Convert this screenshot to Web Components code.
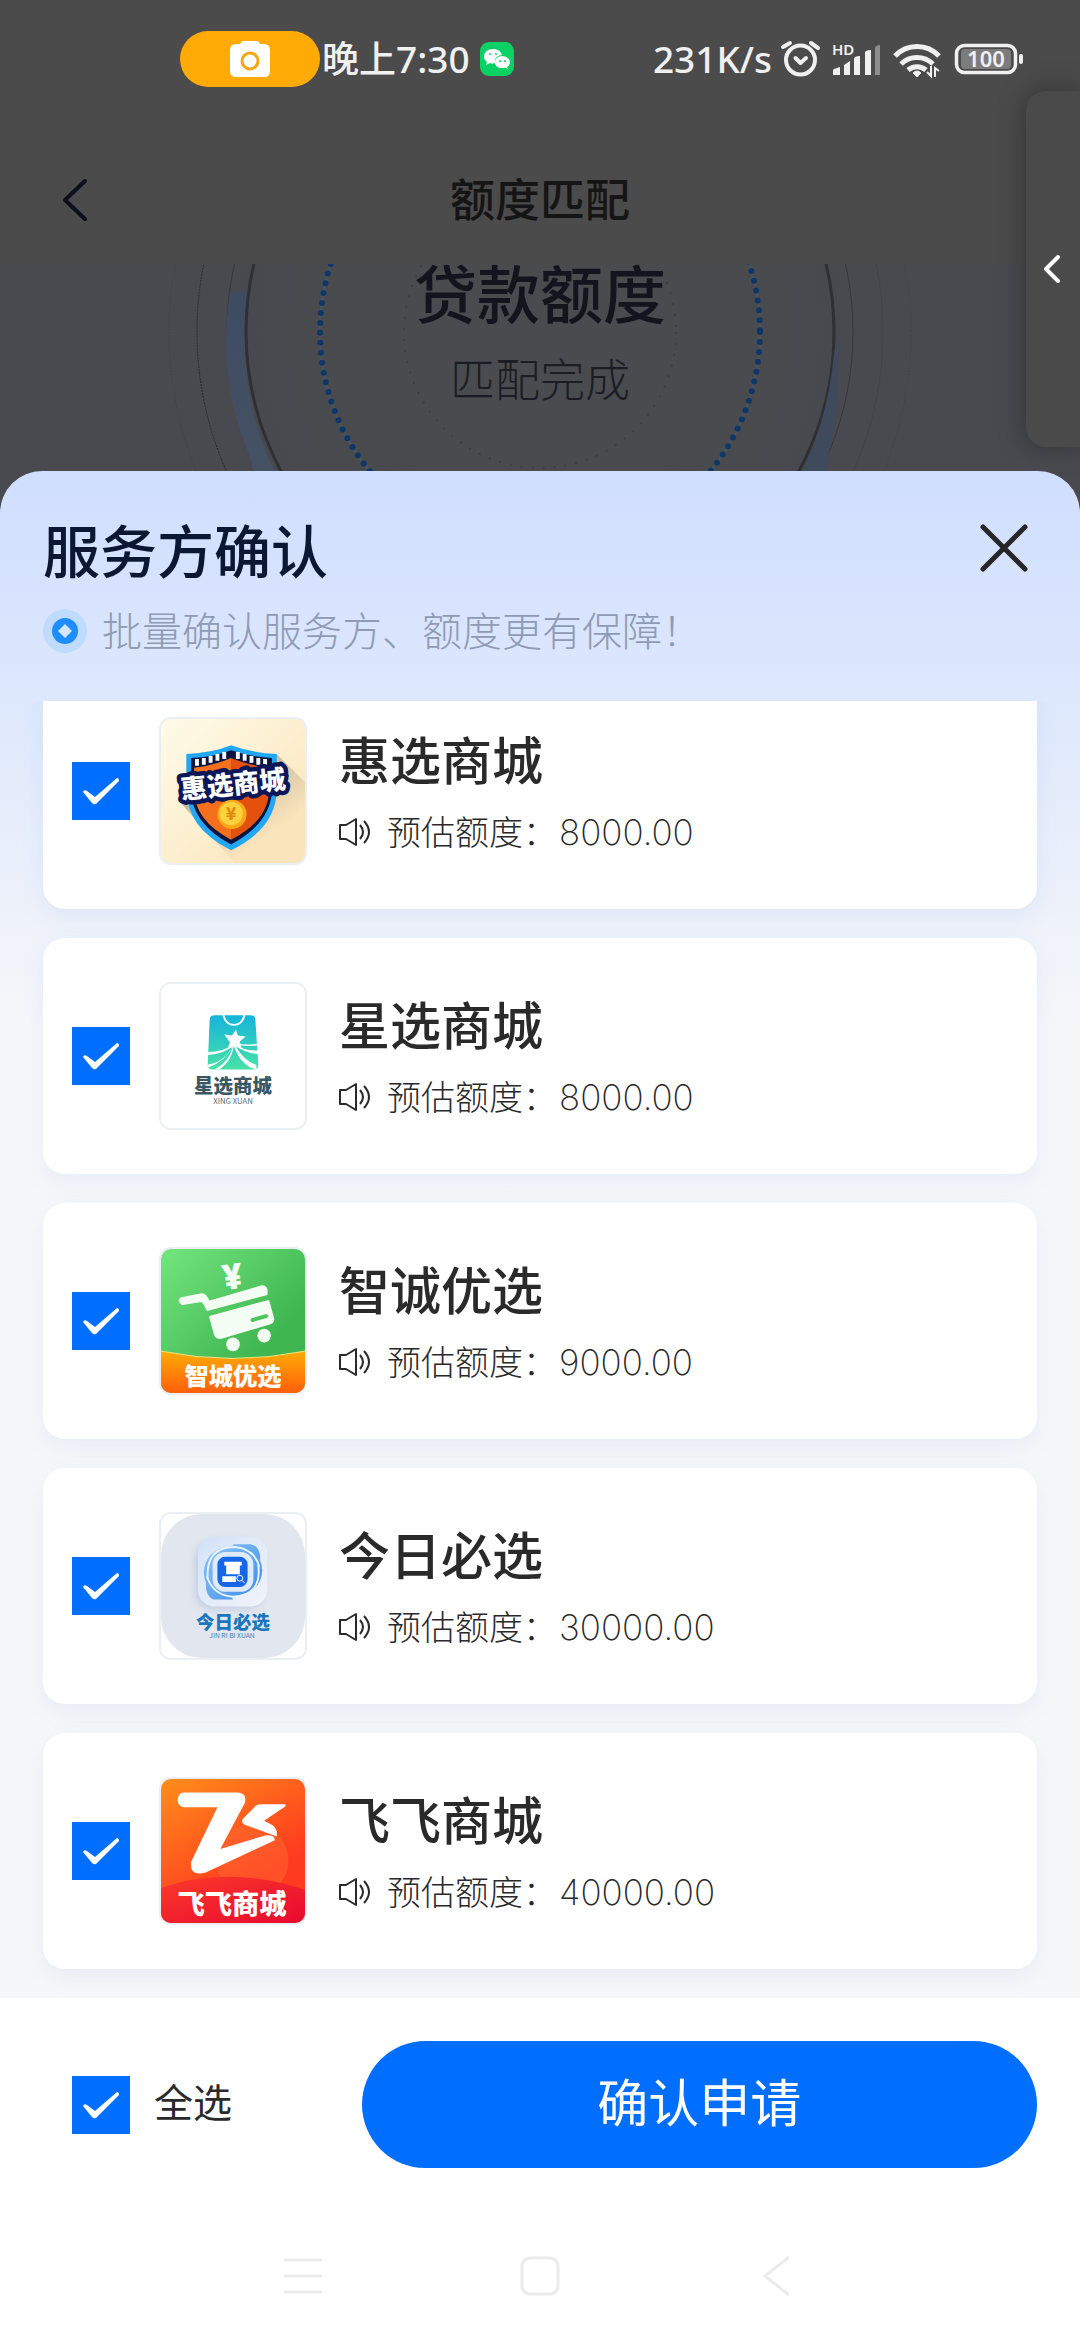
<!DOCTYPE html>
<html lang="zh-CN">
<head>
<meta charset="utf-8">
<meta name="viewport" content="width=device-width, initial-scale=1">
<title>额度匹配</title>
<style>
body {
  margin: 0;
  height: 100vh;
  display: flex;
  flex-direction: column;
  background: #4b4b4b;
  color: #2a2a2a;
  font-family: "Noto Sans", "Noto Sans CJK SC", sans-serif;
  overflow: hidden;
}
svg text {
  font-family: "Noto Sans CJK SC", sans-serif;
  font-weight: 900;
  text-anchor: middle;
}
</style>
</head>
<body>

<status-bar></status-bar>
<page-header>额度匹配</page-header>
<match-stage>
  <span slot="title">贷款额度</span>
  <span slot="state">匹配完成</span>
</match-stage>
<side-handle></side-handle>

<confirm-sheet>
  <span slot="title">服务方确认</span>
  <span slot="hint">批量确认服务方、额度更有保障！</span>

  <provider-card amount="8000.00">
    惠选商城
    <svg slot="logo" viewBox="0 0 148 148" aria-hidden="true">
      <defs>
        <linearGradient id="hx-bg" x1="0" y1="0" x2="1" y2="1">
          <stop offset="0" stop-color="#fefbea"/><stop offset="1" stop-color="#fbe3b5"/>
        </linearGradient>
        <linearGradient id="hx-sh" x1="0.2" y1="0" x2="1" y2="1">
          <stop offset="0.2" stop-color="#c4b7a1"/><stop offset="0.7" stop-color="#fae4bb"/>
        </linearGradient>
      </defs>
      <rect width="148" height="148" fill="url(#hx-bg)"/>
      <path d="M119 36L148 65V148H76L20 86Z" fill="url(#hx-sh)"/>
      <path d="M26 36Q52 35 72 27Q94 35 119 36V72Q119 112 72 135Q26 112 26 72Z" fill="#22a7f5"/>
      <path d="M31 40Q54 39 72 32Q92 39 114 40V73Q113 107 72 129Q31 107 31 73Z" fill="#0b1440"/>
      <path d="M34 50Q54 48 72 40V124Q34 104 34 73Z" fill="#f4701c"/>
      <path d="M72 40Q92 48 111 50V73Q111 104 72 124Z" fill="#e4500e"/>
      <path d="M37 41v7M44 40v7M51 38v7M58 36v7M65 34v7M79 34v7M86 36v7M93 38v7M100 40v7M107 41v7" stroke="#fff" stroke-width="4"/>
      <g transform="rotate(-6 74 66)">
        <text x="74" y="77" font-size="27" fill="#fff" stroke="#0b1758" stroke-width="9" stroke-linejoin="round" paint-order="stroke">惠选商城</text>
      </g>
      <circle cx="73" cy="98" r="15" fill="#f9a81a"/>
      <circle cx="72" cy="97" r="12" fill="#fdd23c"/>
      <text x="72" y="104" font-size="18" fill="#e08a10">¥</text>
    </svg>
  </provider-card>

  <provider-card amount="8000.00">
    星选商城
    <svg slot="logo" viewBox="0 0 148 148" aria-hidden="true">
      <defs>
        <linearGradient id="xx" x1="0" y1="0" x2="0" y2="1">
          <stop offset="0" stop-color="#14b4dc"/><stop offset="1" stop-color="#48e2a6"/>
        </linearGradient>
      </defs>
      <rect width="148" height="148" fill="#fff"/>
      <path d="M55 32H92Q97 32 97 37L100 83Q100 88 95 88H53Q48 88 48 83L50 37Q50 32 55 32Z" fill="url(#xx)"/>
      <path d="M64 31Q66 42 75 42Q84 42 86 31" fill="none" stroke="#fff" stroke-width="2"/>
      <path d="M77 47L79 53L87 54L81 59L83 67L76 64L68 67L71 60L65 52L73 53Z" fill="#fff"/>
      <path d="M74 62Q64 70 48 70V73Q66 72 74 63Q66 80 48 83V86Q66 80 74 64Q70 80 55 88H60Q72 80 75 64Q82 84 98 88V83Q86 80 76 63Q88 72 101 72V68Q88 70 76 62Q86 65 101 63V61Q86 64 76 60Z" fill="#fff"/>
      <text x="74" y="112" font-size="20" fill="#3a5862">星选商城</text>
      <text x="74" y="123" font-size="8" fill="#55717a" style="font-weight: 400">XING XUAN</text>
    </svg>
  </provider-card>

  <provider-card amount="9000.00">
    智诚优选
    <svg slot="logo" viewBox="0 0 148 148" aria-hidden="true">
      <defs>
        <linearGradient id="zc-bg" x1="0" y1="0" x2="1" y2="1">
          <stop offset="0" stop-color="#74e57f"/><stop offset="0.7" stop-color="#3fb650"/>
        </linearGradient>
        <linearGradient id="zc-foot" x1="0" y1="0" x2="0" y2="1">
          <stop offset="0" stop-color="#ffab05"/><stop offset="1" stop-color="#ff5f0a"/>
        </linearGradient>
      </defs>
      <rect width="148" height="148" fill="url(#zc-bg)"/>
      <path d="M0 105Q74 120 148 105V148H0Z" fill="url(#zc-foot)"/>
      <path d="M0 105Q74 120 148 105" fill="none" stroke="#ffe27a"/>
      <g fill="#f4fdf4" stroke="#f4fdf4" stroke-width="3" stroke-linejoin="round">
        <path d="M21 51L42 47Q46 47 49 55L103 39Q107 38 108 42V46L48 62Q44 53 41 53L22 56Q18 54 21 51Z"/>
        <path d="M51 70L110 54L115 72Q115 75 112 76L61 91Q57 91 56 88Z"/>
      </g>
      <path d="M94 73L108 69" stroke="#4fc35e" stroke-width="4" stroke-linecap="round"/>
      <circle cx="74" cy="98" r="7" fill="#f4fdf4"/>
      <circle cx="106" cy="89" r="7" fill="#f4fdf4"/>
      <text x="73" y="41" font-size="36" fill="#f4fdf4" transform="rotate(-8 73 26)" style="font-family: 'Noto Sans', sans-serif">¥</text>
      <text x="74" y="140" font-size="25" fill="#fff">智城优选</text>
    </svg>
  </provider-card>

  <provider-card amount="30000.00">
    今日必选
    <svg slot="logo" viewBox="0 0 148 148" aria-hidden="true">
      <defs>
        <linearGradient id="jr-tile" x1="0" y1="0" x2="1" y2="1">
          <stop offset="0" stop-color="#d3e2f8"/><stop offset="1" stop-color="#f1f4fa"/>
        </linearGradient>
        <linearGradient id="jr-ring" x1="0" y1="0" x2="1" y2="1">
          <stop offset="0" stop-color="#8cc6fa"/><stop offset="1" stop-color="#3c8be6"/>
        </linearGradient>
        <filter id="jr-soft" x="-30%" y="-30%" width="160%" height="160%"><feGaussianBlur stdDeviation="4"/></filter>
      </defs>
      <rect width="148" height="148" fill="#fff"/>
      <rect width="148" height="148" rx="42" fill="#e2e6ee"/>
      <rect x="35" y="28" width="70" height="70" rx="18" fill="#c3cee2" filter="url(#jr-soft)"/>
      <rect x="38" y="23" width="71" height="72" rx="17" fill="url(#jr-tile)"/>
      <g fill="url(#jr-ring)">
        <circle cx="70" cy="60" r="26"/>
        <circle cx="78" cy="58" r="26"/>
        <path d="M74 31H92Q102 33 102 46L96 70ZM74 88H54Q46 85 46 72L52 48Z"/>
      </g>
      <path d="M48 66Q46 34 76 34Q96 36 101 54M100 52Q104 84 74 85Q54 84 47 64" fill="none" stroke="#eaf3ff" stroke-width="2"/>
      <rect x="53" y="39" width="42" height="41" rx="13" fill="#dfeafa"/>
      <rect x="58" y="44" width="31" height="31" rx="8" fill="#1667e6"/>
      <path d="M65 49H83V53H81V62H67V53H65ZM63 64H77V70H63Z" fill="#fff"/>
      <circle cx="81" cy="66" r="3" fill="#1667e6" stroke="#fff" stroke-width="1"/>
      <path d="M83 68l3 3" stroke="#fff" stroke-width="1"/>
      <text x="74" y="118" font-size="19" fill="#1976bd">今日必选</text>
      <text x="73" y="127" font-size="7" fill="#3a80b8" style="font-weight: 400">JIN RI BI XUAN</text>
    </svg>
  </provider-card>

  <provider-card amount="40000.00">
    飞飞商城
    <svg slot="logo" viewBox="0 0 148 148" aria-hidden="true">
      <defs>
        <linearGradient id="ff-bg" x1="0" y1="0" x2="0.6" y2="1">
          <stop offset="0" stop-color="#ff8e1a"/><stop offset="0.8" stop-color="#ff3b1f"/>
        </linearGradient>
        <linearGradient id="ff-foot" x1="0" y1="0" x2="1" y2="1">
          <stop offset="0" stop-color="#fb3a2a"/><stop offset="1" stop-color="#e80930"/>
        </linearGradient>
      </defs>
      <rect width="148" height="148" fill="url(#ff-bg)"/>
      <circle cx="94" cy="84" r="37" fill="#ff6a33" opacity="0.45"/>
      <path d="M0 112Q70 88 148 114V148H0Z" fill="url(#ff-foot)"/>
      <path d="M24 14H79Q89 15 86 25L61 72L107 58Q117 57 117 63L46 96Q29 101 31 85L58 29H24Q17 28 17 21Q18 14 24 14Z" fill="#fff"/>
      <path d="M128 26H103Q98 26 95 30L84 41Q82 45 86 47L119 59V54Q118 49 112 46L106 43L128 28Z" fill="#fff"/>
      <text x="73" y="139" font-size="28" fill="#fff">飞飞商城</text>
    </svg>
  </provider-card>
</confirm-sheet>

<system-nav></system-nav>

<template id="status-bar">
  <style>
    :host {
      display: flex;
      justify-content: space-between;
      align-items: center;
      height: 118px;
      padding: 0 56px 18px 180px;
      color: #f0f0f0;
      font-size: 37px;
      line-height: 44px;
      font-weight: 500;
      flex: none;
    }
    .left, .right { display: flex; align-items: center; white-space: nowrap; }
    .right { gap: 8px; }
    svg { display: block; }
    .pill {
      display: grid;
      place-items: center;
      width: 140px;
      height: 56px;
      border-radius: 28px;
      background: #ffaa05;
    }
    time { margin: 0 10px 0 2px; }
    text { font-family: "Noto Sans", sans-serif; font-weight: 600; fill: #f0f0f0; }
  </style>
  <div class="left">
    <div class="pill">
      <svg width="40" height="36" viewBox="0 0 40 36">
        <path d="M6 3H10L12 0H28L30 3H34Q40 3 40 9V30Q40 36 34 36H6Q0 36 0 30V9Q0 3 6 3Z" fill="#fff"/>
        <circle cx="20" cy="20" r="8" fill="#fff" stroke="#f9a51a" stroke-width="3"/>
      </svg>
    </div>
    <time>晚上7:30</time>
    <svg width="34" height="34" viewBox="0 0 34 34">
      <rect width="34" height="34" rx="9" fill="#0bd165"/>
      <path d="M13 7C8 7 4 10 4 14.500C4 17 5 18.500 7 20L6 23L10 21Q12 22 15 21C14 16 18 13 22 13C21 9 17 7 13 7Z" fill="#fff"/>
      <path d="M22 14C18 14 15 17 15 20C15 24 18 26 22 26Q24 26 25 25.500L28 27L27 25C29 24 30 22 30 20C30 17 26 14 22 14Z" fill="#fff"/>
      <g fill="#0bd165"><circle cx="10" cy="12" r="1"/><circle cx="16" cy="12" r="1"/><circle cx="20" cy="19" r="1"/><circle cx="25" cy="19" r="1"/></g>
    </svg>
  </div>
  <div class="right">
    <span>231K/s</span>
    <svg width="44" height="40" viewBox="0 0 44 40" fill="none" stroke="#f0f0f0" stroke-width="4" stroke-linecap="round" stroke-linejoin="round">
      <circle cx="20.500" cy="21" r="14.500"/>
      <path d="M3 8L10 4M31 4L38 9M15.500 19L20.500 24L26 19"/>
    </svg>
    <svg width="52" height="40" viewBox="0 0 52 40" fill="#f0f0f0">
      <text x="0" y="16" font-size="15">HD</text>
      <path d="M2 30L8 28V36H1V31ZM12 26L18 22V36H12ZM22 20Q22 17 28 17V36H22ZM33 13Q34 11 39 11V36H33Z"/>
      <path d="M43 9Q44 6 48 6V36H43Z" fill="#8d8d8d"/>
    </svg>
    <svg width="54" height="40" viewBox="0 0 54 40" fill="none" stroke="#f0f0f0" stroke-width="5">
      <path d="M3 17A30 30 0 0 1 47 17M9 25A23 23 0 0 1 41 25M16 31A14 14 0 0 1 34 31"/>
      <path d="M21 34Q25 30 29 34L25 38Z" fill="#f0f0f0" stroke-width="1"/>
      <path d="M39 27V37L35 33M43 38V29L47 32" stroke-width="2"/>
    </svg>
    <svg width="70" height="32" viewBox="0 0 70 32">
      <rect x="2.500" y="2.500" width="59" height="27" rx="8" fill="none" stroke="#f0f0f0" stroke-width="3.500"/>
      <rect x="7" y="6" width="50" height="20" rx="4" fill="#7c7c7c"/>
      <rect x="65" y="11" width="4" height="10" rx="2" fill="#f0f0f0"/>
      <text x="32" y="24" font-size="22" text-anchor="middle">100</text>
    </svg>
  </div>
</template>

<template id="page-header">
  <style>
    :host {
      display: grid;
      grid-template-columns: 1fr auto 1fr;
      align-items: center;
      height: 128px;
      padding: 0 56px;
      flex: none;
      color: #151515;
    }
    button { justify-self: start; padding: 0; border: 0; background: none; }
    svg { display: block; }
    h1 { margin: 0; font-size: 45px; line-height: 60px; font-weight: 500; }
  </style>
  <button aria-label="返回">
    <svg width="40" height="44" viewBox="0 0 40 44" fill="none" stroke="#0c0f1c" stroke-width="4" stroke-linecap="round" stroke-linejoin="round">
      <path d="M29 3L9 22L29 41"/>
    </svg>
  </button>
  <h1><slot></slot></h1>
</template>

<template id="match-stage">
  <style>
    :host {
      display: flex;
      flex-direction: column;
      align-items: center;
      gap: 32px;
      position: relative;
      height: 249px;
      flex: none;
      background: #494a4f;
    }
    svg { position: absolute; inset: 0; width: 100%; height: 100%; }
    h2, p { position: relative; margin: 0; }
    h2 { color: #14141f; font-size: 63px; line-height: 60px; font-weight: 500; }
    p { color: #1c1d24; font-size: 45px; line-height: 48px; font-weight: 300; }
  </style>
  <svg viewBox="0 0 1080 249" preserveAspectRatio="xMidYMid slice" fill="none" aria-hidden="true">
    <defs>
      <linearGradient id="arc" x1="0" y1="0" x2="0" y2="1">
        <stop offset="0" stop-color="#3e4c62"/><stop offset="1" stop-color="#465264"/>
      </linearGradient>
      <radialGradient id="glow" cx="540" cy="68" r="300" gradientUnits="userSpaceOnUse">
        <stop offset="0.6" stop-color="#4a4b4e"/><stop offset="1" stop-color="#47494e"/>
      </radialGradient>
    </defs>
    <circle cx="540" cy="68" r="300" fill="url(#glow)"/>
    <circle cx="540" cy="68" r="371" stroke="#3e4046" stroke-dasharray="1 2"/>
    <path d="M540 -275A343 343 0 0 0 540 411" stroke="#26282d" stroke-dasharray="2 1"/>
    <path d="M540 -275A343 343 0 0 1 540 411" stroke="#42444a"/>
    <circle cx="540" cy="68" r="313" stroke="#35373d"/>
    <path d="M230 28Q214 130 264 220L282 220Q234 140 248 28Z" fill="url(#arc)"/>
    <path d="M258 208L284 249H266L246 180Z" fill="#465264"/>
    <circle cx="540" cy="68" r="294" stroke="#2f3033" stroke-width="3"/>
    <path d="M834 90Q826 170 792 225L778 249H812Q842 170 838 68Z" fill="#3f4a5c"/>
    <circle cx="540" cy="68" r="220" stroke="#4a535c" stroke-width="3"/>
    <circle cx="540" cy="68" r="220" stroke="#0e3768" stroke-width="6" stroke-linecap="round" stroke-dasharray="0 10"/>
    <circle cx="540" cy="68" r="136" stroke="#3e4045" stroke-width="2" stroke-dasharray="2 9"/>
  </svg>
  <h2><slot name="title"></slot></h2>
  <p><slot name="state"></slot></p>
</template>

<template id="side-handle">
  <style>
    /* floats over the right edge of the screen */
    :host { position: absolute; top: 91px; right: 0; }
    button {
      display: grid;
      place-items: center;
      width: 54px;
      height: 356px;
      padding: 0;
      border: 0;
      border-radius: 20px 0 0 20px;
      background: #4a4a4a;
      box-shadow: 0 0 28px rgba(0, 0, 0, 0.35);
    }
  </style>
  <button aria-label="展开侧栏">
    <svg width="20" height="30" viewBox="0 0 20 30" fill="none" stroke="#fff" stroke-width="4" stroke-linecap="round" stroke-linejoin="round">
      <path d="M15 3L3 15L15 27"/>
    </svg>
  </button>
</template>

<template id="tick-box">
  <style>
    :host { display: block; flex: none; }
    label { display: flex; align-items: center; }
    .box { display: grid; flex: none; }
    .box > * { grid-area: 1 / 1; }
    input {
      appearance: none;
      width: 58px;
      height: 58px;
      margin: 0;
      background: #dfe5ee;
    }
    input:checked { background: #006eff; }
    svg { pointer-events: none; }
    input:not(:checked) + svg { display: none; }
    ::slotted(*) { margin-left: 24px; }
  </style>
  <label>
    <span class="box">
      <input type="checkbox" checked>
      <svg width="58" height="58" viewBox="0 0 58 58" aria-hidden="true">
        <path d="M11 30Q12 27 15 29L23 35L45 16Q47 16 47 19L24 42Q22 43 20 41Z" fill="#fff"/>
      </svg>
    </span>
    <slot></slot>
  </label>
</template>

<template id="provider-card">
  <style>
    :host {
      display: flex;
      align-items: center;
      padding: 44px 29px;
      border-radius: 22px;
      background: #fff;
      box-shadow: 0 8px 24px rgba(70, 120, 210, 0.08);
      flex: none;
    }
    .logo {
      box-sizing: border-box;
      width: 148px;
      height: 148px;
      margin: 0 32px 0 29px;
      border: 2px solid #e9eff3;
      border-radius: 12px;
      overflow: hidden;
    }
    ::slotted(svg) { display: block; width: 100%; height: 100%; }
    .info { display: flex; flex-direction: column; gap: 22px; }
    h3 { margin: 0; font-size: 51px; line-height: 60px; font-weight: 500; }
    p { display: flex; align-items: center; margin: 0; font-size: 34px; line-height: 40px; font-weight: 300; }
    p svg { margin-right: 16px; }
    .amount { margin-left: 2px; font-family: Inter, sans-serif; font-size: 35px; font-weight: 200; }
  </style>
  <tick-box></tick-box>
  <div class="logo"><slot name="logo"></slot></div>
  <div class="info">
    <h3><slot></slot></h3>
    <p>
      <svg width="32" height="30" viewBox="0 0 32 30" fill="none" stroke="#2a2a2a" stroke-width="2" stroke-linejoin="round" aria-hidden="true">
        <path d="M1 8H7L17 2V28L7 22H1ZM21 8Q27 15 21 22M25 4Q35 15 25 26"/>
      </svg>
      <span>预估额度：</span><span class="amount"></span>
    </p>
  </div>
</template>

<template id="confirm-sheet">
  <style>
    :host {
      display: flex;
      flex-direction: column;
      flex: 1;
      min-height: 0;
      position: relative;
      margin-top: -42px;
      border-radius: 42px 42px 0 0;
      background: linear-gradient(#d0deff 0, #dce7fd 200px, #f6f7f9 560px, #f6f7f8 100%);
      overflow: hidden;
    }
    header {
      display: flex;
      flex-direction: column;
      gap: 26px;
      padding: 48px 43px;
    }
    .top { display: flex; justify-content: space-between; align-items: flex-start; height: 64px; }
    h2 { margin: 0; color: #0c1732; font-size: 57px; line-height: 64px; font-weight: 500; }
    .close { padding: 4px 8px 0 0; border: 0; background: none; }
    svg { display: block; flex: none; }
    .hint { display: flex; align-items: center; gap: 15px; margin: 0; color: #8f9bb5; font-size: 40px; line-height: 44px; font-weight: 300; }
    .list {
      display: flex;
      flex-direction: column;
      gap: 29px;
      flex: 1;
      min-height: 0;
      padding: 0 43px 29px;
      overflow-y: auto;
      scrollbar-width: none;
    }
    footer {
      display: flex;
      align-items: center;
      justify-content: space-between;
      gap: 43px;
      padding: 43px 43px 43px 72px;
      background: #fff;
    }
    footer span { padding-bottom: 6px; font-size: 39px; line-height: 44px; }
    .apply {
      width: 70%;
      height: 127px;
      padding: 0 0 6px;
      border: 0;
      border-radius: 64px;
      background: #006eff;
      color: #fff;
      font: inherit;
      font-size: 51px;
      line-height: 60px;
    }
  </style>
  <header>
    <div class="top">
      <h2><slot name="title"></slot></h2>
      <button class="close" aria-label="关闭">
        <svg width="50" height="50" viewBox="0 0 50 50" fill="none" stroke="#262626" stroke-width="5" stroke-linecap="round">
          <path d="M4 4L46 46M46 4L4 46"/>
        </svg>
      </button>
    </div>
    <p class="hint">
      <svg width="44" height="44" viewBox="0 0 44 44" aria-hidden="true">
        <circle cx="22" cy="22" r="22" fill="#bfdbff"/>
        <circle cx="22" cy="22" r="13" fill="#1c8eff"/>
        <path d="M22 15L29 22L22 29L15 22Z" fill="#d5e6ff"/>
      </svg>
      <slot name="hint"></slot>
    </p>
  </header>
  <div class="list"><slot></slot></div>
  <footer>
    <tick-box><span>全选</span></tick-box>
    <button class="apply">确认申请</button>
  </footer>
</template>

<template id="system-nav">
  <style>
    :host { display: grid; background: #fff; flex: none; }
    nav { display: grid; grid-template-columns: repeat(3, 158px); justify-content: center; justify-items: center; gap: 79px; height: 129px; align-items: center; }
    button { padding: 0; border: 0; background: none; }
    svg { display: block; }
  </style>
  <nav>
    <button aria-label="最近任务"><svg width="40" height="40" viewBox="0 0 40 40" stroke="#ebebeb" stroke-width="3"><path d="M1 4H39M1 20H39M1 36H39"/></svg></button>
    <button aria-label="主屏幕"><svg width="40" height="40" viewBox="0 0 40 40" fill="none" stroke="#ebebeb" stroke-width="3"><rect x="2" y="2" width="36" height="36" rx="8"/></svg></button>
    <button aria-label="返回"><svg width="40" height="40" viewBox="0 0 40 40" fill="none" stroke="#ebebeb" stroke-width="3"><path d="M32 1L8 20L32 39"/></svg></button>
  </nav>
</template>

<script>
class BaseElement extends HTMLElement {
  constructor() {
    super();
    const template = document.getElementById(this.localName);
    this.attachShadow({ mode: "open" });
    this.shadowRoot.appendChild(template.content.cloneNode(true));
  }
}

class StatusBar extends BaseElement {}
class PageHeader extends BaseElement {}
class MatchStage extends BaseElement {}
class SideHandle extends BaseElement {}
class SystemNav extends BaseElement {}

class TickBox extends BaseElement {
  get input() {
    return this.shadowRoot.querySelector("input");
  }
}

class ProviderCard extends BaseElement {
  connectedCallback() {
    this.shadowRoot.querySelector(".amount").textContent = this.getAttribute("amount");
    this.tick.input.setAttribute("aria-label", this.textContent.trim().split("\n")[0]);
  }

  get tick() {
    return this.shadowRoot.querySelector("tick-box");
  }
}

class ConfirmSheet extends BaseElement {
  connectedCallback() {
    const all = this.shadowRoot.querySelector("tick-box").input;
    all.addEventListener("change", () => {
      this.querySelectorAll("provider-card").forEach((card) => {
        card.tick.input.checked = all.checked;
      });
    });

    // open on the last provider
    const list = this.shadowRoot.querySelector(".list");
    list.scrollTop = list.scrollHeight;
  }
}

window.customElements.define("status-bar", StatusBar);
window.customElements.define("page-header", PageHeader);
window.customElements.define("match-stage", MatchStage);
window.customElements.define("side-handle", SideHandle);
window.customElements.define("system-nav", SystemNav);
window.customElements.define("tick-box", TickBox);
window.customElements.define("provider-card", ProviderCard);
window.customElements.define("confirm-sheet", ConfirmSheet);
</script>
</body>
</html>
